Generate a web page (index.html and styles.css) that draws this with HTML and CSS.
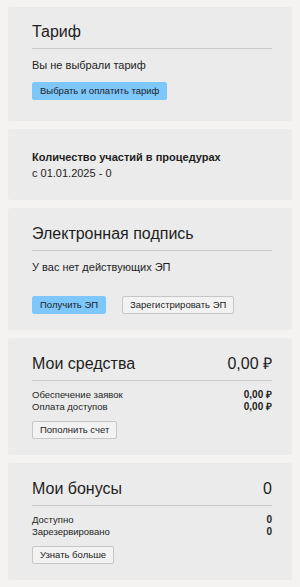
FILE: index.html
```html
<!DOCTYPE html>
<html lang="ru">
<head>
  <meta charset="UTF-8" />
  <meta name="viewport" content="width=device-width, initial-scale=1.0" />
  <title>Личный кабинет</title>
  <link rel="stylesheet" href="styles.css">
</head>
<body>
  <div class="card card-tariff">
    <div class="card-title"><span>Тариф</span></div>
    <p class="card-text">Вы не выбрали тариф</p>
    <button class="btn btn-primary">Выбрать и оплатить тариф</button>
  </div>

  <div class="card card-plain">
    <p class="stat">Количество участий в процедурах</p>
    <p class="stat-sub">с 01.01.2025 - 0</p>
  </div>

  <div class="card">
    <div class="card-title"><span>Электронная подпись</span></div>
    <p class="card-text">У вас нет действующих ЭП</p>
    <div class="actions">
      <button class="btn btn-primary">Получить ЭП</button>
      <button class="btn">Зарегистрировать ЭП</button>
    </div>
  </div>

  <div class="card">
    <div class="card-title"><span>Мои средства</span><span>0,00 ₽</span></div>
    <div class="rows">
      <div class="row"><span>Обеспечение заявок</span><b>0,00 ₽</b></div>
      <div class="row"><span>Оплата доступов</span><b>0,00 ₽</b></div>
    </div>
    <button class="btn">Пополнить счет</button>
  </div>

  <div class="card">
    <div class="card-title"><span>Мои бонусы</span><span>0</span></div>
    <div class="rows">
      <div class="row"><span>Доступно</span><b>0</b></div>
      <div class="row"><span>Зарезервировано</span><b>0</b></div>
    </div>
    <button class="btn">Узнать больше</button>
  </div>
</body>
</html>
```

FILE: styles.css
```css
body {
  font-family: 'Liberation Sans', Arial, sans-serif;
  margin: 0;
  padding: 7px 8px;
  background-color: #f4f3f1;
  color: #1e1e1e;
}
.card {
  background-color: #ebebeb;
  border-radius: 3px;
  padding: 16px 20px 16px 24px;
  margin-bottom: 8px;
}
.card-tariff {
  padding-top: 15px;
  padding-bottom: 21px;
}
.card-title {
  display: flex;
  justify-content: space-between;
  font-size: 16px;
  line-height: 20px;
  padding-bottom: 6px;
  border-bottom: 1px solid #c9c9c9;
}
.card-text {
  font-size: 11px;
  line-height: 14px;
  margin: 9px 0 0;
}
.card-plain {
  padding-top: 20px;
  padding-bottom: 19px;
}
.stat, .stat-sub {
  font-size: 11px;
  line-height: 16px;
  margin: 0;
}
.stat {
  font-weight: bold;
}
.btn {
  font-family: inherit;
  font-size: 9.5px;
  line-height: 14px;
  color: #222;
  background-color: #f2f2f2;
  border: 1px solid #c6c6c6;
  border-radius: 2px;
  padding: 1px 7px;
  margin-top: 10px;
  cursor: pointer;
}
.btn-primary {
  background-color: #7dc7fb;
  border-color: #7dc7fb;
}
.actions {
  display: flex;
  gap: 16px;
  margin-top: 22px;
}
.actions .btn {
  margin-top: 0;
}
.rows {
  margin-top: 8px;
}
.rows + .btn {
  margin-top: 8px;
}
.row {
  display: flex;
  justify-content: space-between;
  align-items: baseline;
  font-size: 9.5px;
  line-height: 12px;
}
.row b {
  font-size: 10px;
  font-weight: bold;
}
```
